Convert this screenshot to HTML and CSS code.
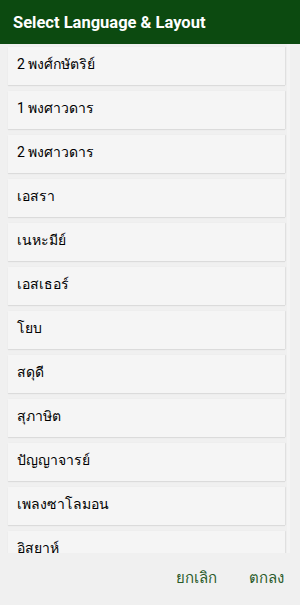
FILE: index.html
```html
<!DOCTYPE html>
<html lang="th">
<head>
<meta charset="UTF-8">
<meta name="viewport" content="width=device-width, initial-scale=1.0">
<title>Select Language &amp; Layout</title>
<link rel="stylesheet" href="styles.css">
</head>
<body>
  <div class="dialog">
    <div class="dialog-title">Select Language &amp; Layout</div>

    <div class="list">
      <div class="item">2 พงศ์กษัตริย์</div>
      <div class="item">1 พงศาวดาร</div>
      <div class="item">2 พงศาวดาร</div>
      <div class="item">เอสรา</div>
      <div class="item">เนหะมีย์</div>
      <div class="item">เอสเธอร์</div>
      <div class="item">โยบ</div>
      <div class="item">สดุดี</div>
      <div class="item">สุภาษิต</div>
      <div class="item">ปัญญาจารย์</div>
      <div class="item">เพลงซาโลมอน</div>
      <div class="item">อิสยาห์</div>
    </div>

    <div class="buttons">
      <button class="btn">ยกเลิก</button>
      <button class="btn">ตกลง</button>
    </div>
  </div>
</body>
</html>
```

FILE: styles.css
```css
body {
  margin: 0;
  padding: 0;
  background: #f0f0f0;
  font-family: Roboto, "Noto Sans", sans-serif;
}

.dialog {
  width: 300px;
  height: 605px;
  display: flex;
  flex-direction: column;
}

.dialog-title {
  background: #0c4a10;
  color: #ffffff;
  font-size: 16.5px;
  font-weight: bold;
  height: 44px;
  line-height: 45px;
  padding-left: 13px;
  flex-shrink: 0;
}

.list {
  height: 509px;
  overflow: hidden;
  padding: 3px 2px 0 8px;
  display: flex;
  flex-direction: column;
  gap: 6px;
  border-right: 3px solid #f4f4f4;
  box-sizing: border-box;
  width: 290px;
}

.item {
  flex-shrink: 0;
  height: 38px;
  box-sizing: border-box;
  padding: 0 0 5px 9px;
  display: flex;
  align-items: center;
  background: #f5f5f5;
  color: #000000;
  font-size: 14px;
  line-height: 16px;
  box-shadow: 0 1px 1px rgba(0, 0, 0, 0.08), 1px 0 1px rgba(0, 0, 0, 0.05);
}

.buttons {
  flex: 1;
  display: flex;
  justify-content: flex-end;
  align-items: center;
  gap: 20px;
  padding-right: 10px;
  padding-bottom: 2px;
}

.btn {
  background: none;
  border: none;
  font-family: Roboto, "Noto Sans", sans-serif;
  font-size: 15px;
  color: #2b5b2b;
  padding: 6px 6px;
  cursor: pointer;
}
```
